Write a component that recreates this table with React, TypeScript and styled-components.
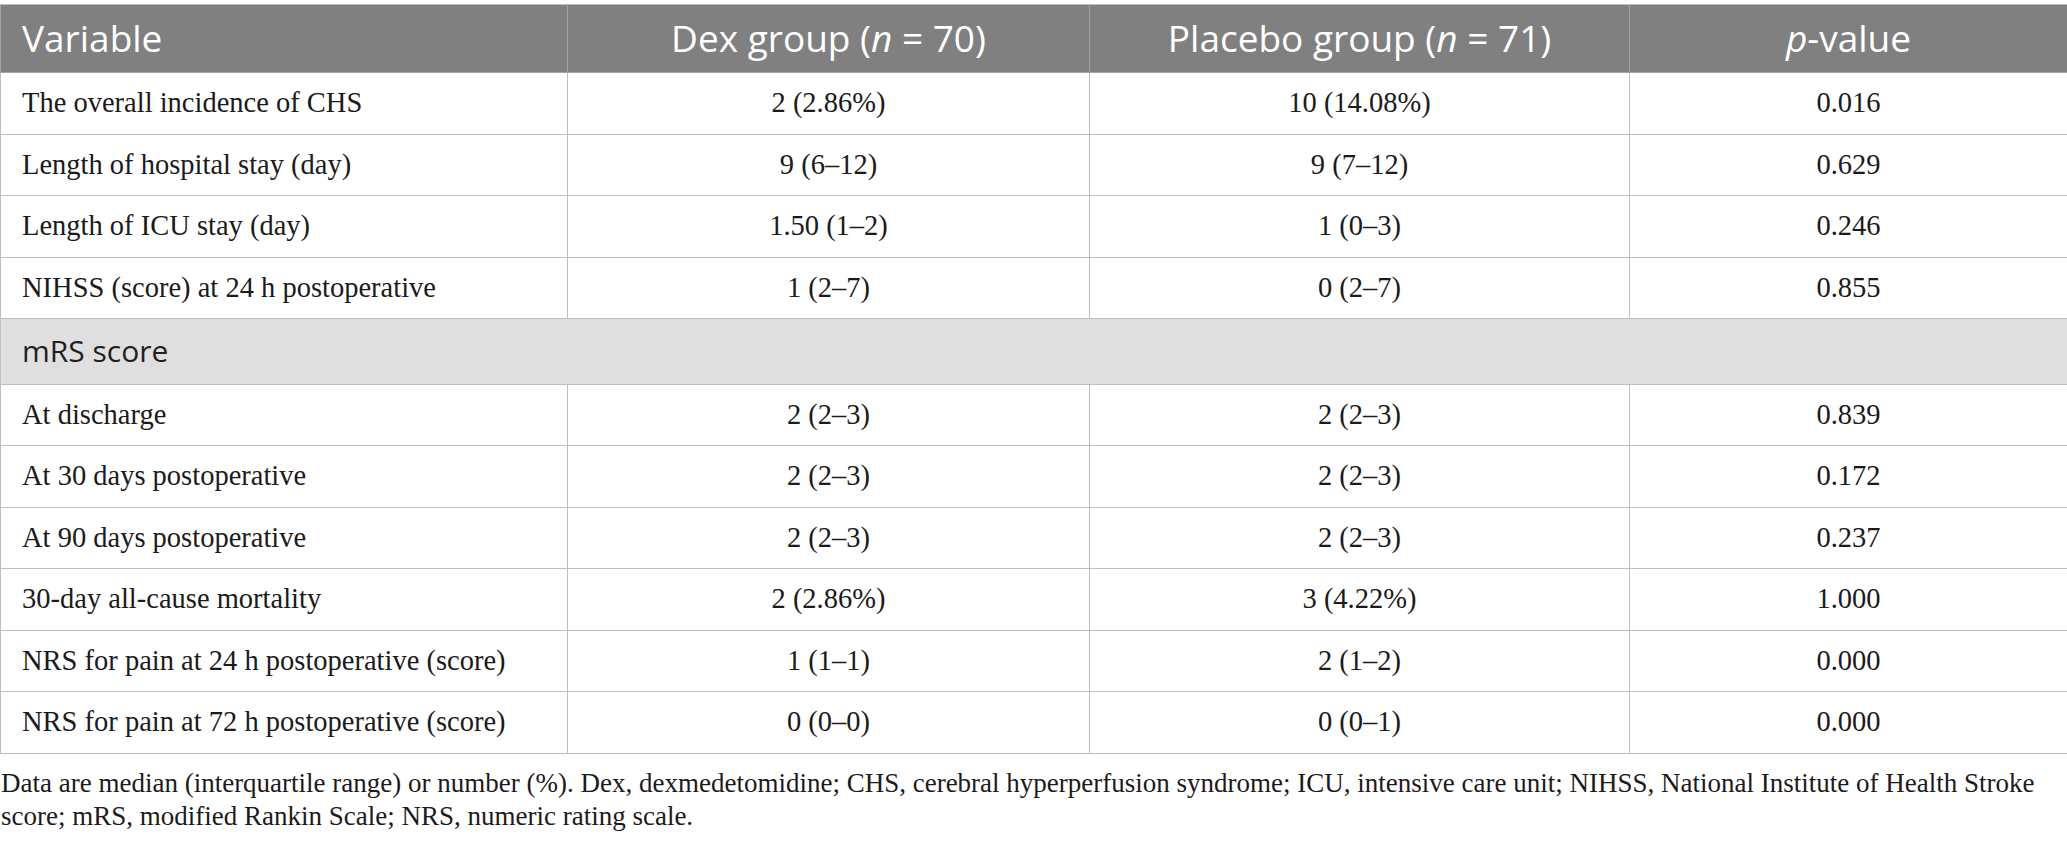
import React from "react";
import styled, { createGlobalStyle } from "styled-components";

const GlobalStyle = createGlobalStyle`
  html, body { margin: 0; padding: 0; background: #ffffff; }
  body { padding-top: 4px; }
`;

const Wrap = styled.div`
  width: 2067px;
  display: flex;
  flex-direction: column;
`;

const Table = styled.table`
  width: 2067px;
  border-collapse: collapse;
  table-layout: fixed;
  border: 1px solid #bfbfbf;
`;

const HeadRow = styled.tr`
  height: 68px;
  background: #7f807f;
`;

const HeadCell = styled.th<{ $align?: "left" | "center" }>`
  font-family: "Open Sans", "Noto Sans", sans-serif;
  font-weight: 400;
  font-size: 37px;
  color: #ffffff;
  text-align: ${(p) => p.$align ?? "center"};
  padding: 0 0 2px 21px;
  border: 1px solid #a3a3a3;
  border-top-color: #bfbfbf;
  vertical-align: middle;
  white-space: nowrap;
  &:not(:first-child) { padding-left: 0; }
`;

const BodyRow = styled.tr`
  height: 61.5px;
  background: #ffffff;
`;

const Cell = styled.td<{ $align?: "left" | "center" }>`
  font-family: "Liberation Serif", "Times New Roman", serif;
  font-size: 28.5px;
  color: #1c1a1b;
  text-align: ${(p) => p.$align ?? "center"};
  padding: 0 0 0 ${(p) => (p.$align === "left" ? "21px" : "0")};
  border: 1px solid #bfbfbf;
  vertical-align: middle;
  white-space: nowrap;
`;

const SectionRow = styled.tr`
  height: 65.5px;
  background: #e0dfe0;
`;

const SectionCell = styled.td`
  font-family: "Open Sans", "Noto Sans", sans-serif;
  font-size: 30px;
  color: #1f1f1f;
  padding: 0 0 2px 21px;
  border: 1px solid #bfbfbf;
  vertical-align: middle;
`;

const Footnote = styled.p`
  margin: 13px 0 0 0;
  padding: 0 0 0 1px;
  font-family: "Liberation Serif", "Times New Roman", serif;
  font-size: 27px;
  line-height: 33.5px;
  color: #1c1a1b;
`;

type Row = [string, string, string, string];

const topRows: Row[] = [
  ["The overall incidence of CHS", "2 (2.86%)", "10 (14.08%)", "0.016"],
  ["Length of hospital stay (day)", "9 (6–12)", "9 (7–12)", "0.629"],
  ["Length of ICU stay (day)", "1.50 (1–2)", "1 (0–3)", "0.246"],
  ["NIHSS (score) at 24 h postoperative", "1 (2–7)", "0 (2–7)", "0.855"],
];

const bottomRows: Row[] = [
  ["At discharge", "2 (2–3)", "2 (2–3)", "0.839"],
  ["At 30 days postoperative", "2 (2–3)", "2 (2–3)", "0.172"],
  ["At 90 days postoperative", "2 (2–3)", "2 (2–3)", "0.237"],
  ["30-day all-cause mortality", "2 (2.86%)", "3 (4.22%)", "1.000"],
  ["NRS for pain at 24 h postoperative (score)", "1 (1–1)", "2 (1–2)", "0.000"],
  ["NRS for pain at 72 h postoperative (score)", "0 (0–0)", "0 (0–1)", "0.000"],
];

const DataRow: React.FC<{ row: Row }> = ({ row }) => (
  <BodyRow>
    <Cell $align="left">{row[0]}</Cell>
    <Cell>{row[1]}</Cell>
    <Cell>{row[2]}</Cell>
    <Cell>{row[3]}</Cell>
  </BodyRow>
);

export default function App() {
  return (
    <>
      <GlobalStyle />
      <Wrap>
        <Table>
          <colgroup>
            <col style={{ width: 567 }} />
            <col style={{ width: 522 }} />
            <col style={{ width: 540 }} />
            <col style={{ width: 438 }} />
          </colgroup>
          <thead>
            <HeadRow>
              <HeadCell $align="left">Variable</HeadCell>
              <HeadCell>
                Dex group (<i>n</i> = 70)
              </HeadCell>
              <HeadCell>
                Placebo group (<i>n</i> = 71)
              </HeadCell>
              <HeadCell>
                <i>p</i>-value
              </HeadCell>
            </HeadRow>
          </thead>
          <tbody>
            {topRows.map((r) => (
              <DataRow key={r[0]} row={r} />
            ))}
            <SectionRow>
              <SectionCell colSpan={4}>mRS score</SectionCell>
            </SectionRow>
            {bottomRows.map((r) => (
              <DataRow key={r[0]} row={r} />
            ))}
          </tbody>
        </Table>
        <Footnote>
          Data are median (interquartile range) or number (%). Dex, dexmedetomidine; CHS, cerebral
          hyperperfusion syndrome; ICU, intensive care unit; NIHSS, National Institute of Health Stroke
          score; mRS, modified Rankin Scale; NRS, numeric rating scale.
        </Footnote>
      </Wrap>
    </>
  );
}
